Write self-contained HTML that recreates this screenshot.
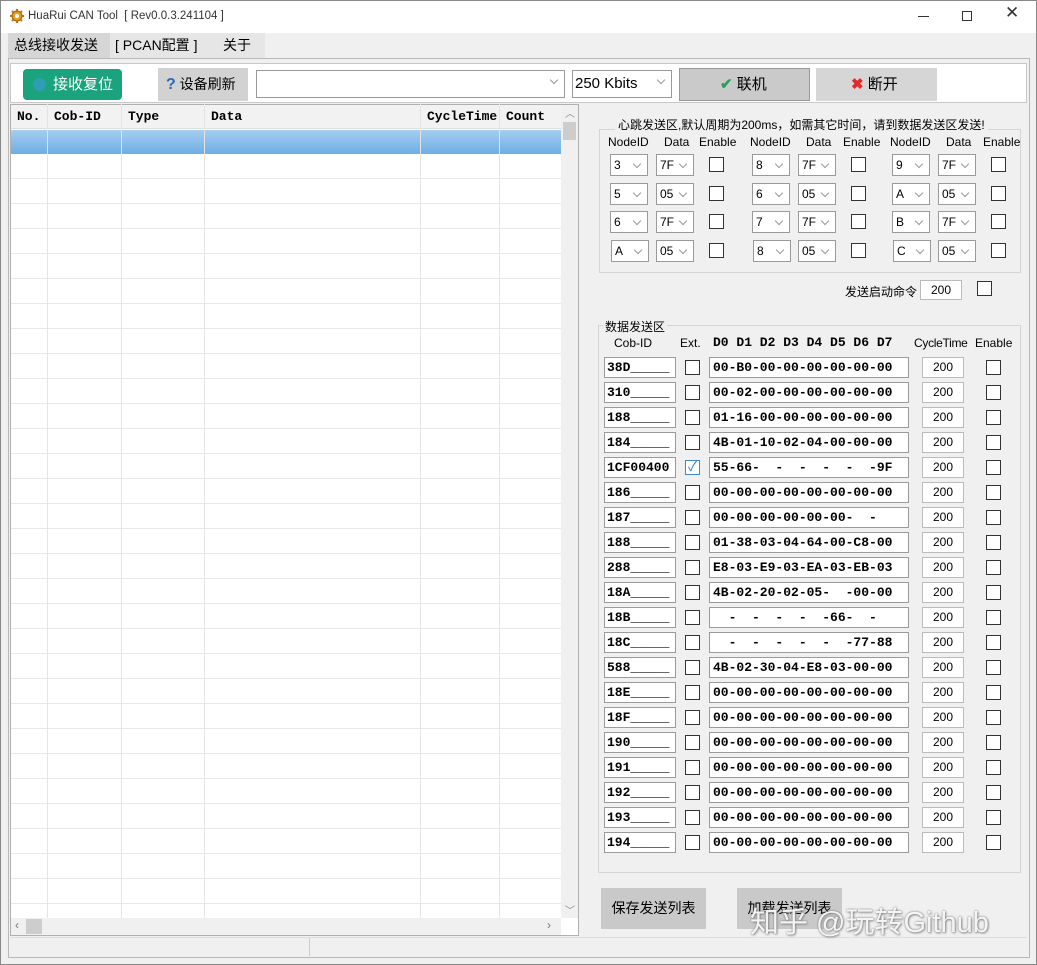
<!DOCTYPE html>
<html><head><meta charset="utf-8"><style>
*{box-sizing:border-box;margin:0;padding:0}
body{width:1037px;height:965px;background:#f0f0f0;position:relative;overflow:hidden;font-family:"Liberation Sans","Noto Sans CJK SC",sans-serif;font-size:12px;color:#000}
.a{position:absolute}
.t{white-space:nowrap}
.mono{font-family:"Liberation Mono","DejaVu Sans Mono",monospace;font-weight:bold;font-size:13px}
.cb{position:absolute;width:15px;height:15px;border:1px solid #333;background:#fff}
.sel{position:absolute;height:22px;border:1px solid #9a9a9a;background:#fff;font-size:12px;line-height:20px;padding-left:3px}
.sel:after{content:"";position:absolute;right:7px;top:6px;width:5px;height:5px;border-right:1px solid #999;border-bottom:1px solid #999;transform:rotate(45deg)}
.in{position:absolute;height:21px;border:1px solid #9a9a9a;background:#fff;line-height:19px;white-space:pre}
.grp{position:absolute;border:1px solid #d5d5d5}
.vl{position:absolute;top:104px;width:1px;height:814px;background:#e4e4e4}
</style></head><body>
<div class="a" style="left:0;top:0;width:1037px;height:33px;background:#fff"></div>
<div class="a" style="left:0;top:0;width:1037px;height:965px;border:1px solid #888;pointer-events:none"></div>
<svg class="a" style="left:9px;top:8px" width="16" height="16" viewBox="0 0 16 16"><circle cx="8" cy="8" r="5" fill="#e0a020" stroke="#a06010"/><circle cx="8" cy="8" r="2" fill="#fff"/><path d="M8 1v3M8 12v3M1 8h3M12 8h3M3 3l2 2M11 11l2 2M13 3l-2 2M3 13l2-2" stroke="#c07010" stroke-width="2"/></svg>
<div class="a t" style="left:28px;top:10px;font-size:11.5px;color:#333">HuaRui CAN Tool &nbsp;[ Rev0.0.3.241104 ]</div>
<div class="a" style="left:918px;top:16px;width:11px;height:1px;background:#333"></div>
<div class="a" style="left:962px;top:11px;width:10px;height:10px;border:1px solid #333"></div>
<div class="a t" style="left:1005px;top:3px;font-size:17px;color:#333">✕</div>
<div class="a" style="left:8px;top:33px;width:257px;height:25px;background:#e6e6e6"></div>
<div class="a t" style="left:8px;top:33px;width:102px;height:25px;background:#d6d6d6;font-size:14px;line-height:25px;padding-left:6px">总线接收发送</div>
<div class="a t" style="left:115px;top:33px;font-size:14px;line-height:25px">[ PCAN配置 ]</div>
<div class="a t" style="left:223px;top:33px;font-size:14px;line-height:25px">关于</div>
<div class="a" style="left:8px;top:58px;width:1022px;height:900px;border:1px solid #b8b8b8;background:#f0f0f0"></div>
<div class="a" style="left:10px;top:63px;width:1017px;height:40px;border:1px solid #c8c8c8;background:#fff"></div>
<div class="a t" style="left:23px;top:69px;width:99px;height:31px;background:#1aa37c;border-radius:4px;color:#fff;font-size:15px;line-height:31px;padding-left:30px">接收复位<div class="a" style="left:10px;top:9px;width:13px;height:13px;border-radius:50%;background:#3a9ad0;opacity:.7"></div></div>
<div class="a t" style="left:158px;top:68px;width:90px;height:33px;background:#d2d2d2;font-size:14px;line-height:33px;padding-left:8px"><b style="color:#2a6ab8;font-size:16px">?</b> 设备刷新</div>
<div class="sel" style="left:256px;top:70px;width:309px;height:28px"></div>
<div class="sel" style="left:572px;top:70px;width:100px;height:28px;font-size:15px;line-height:26px;padding-left:2px">250 Kbits</div>
<div class="a t" style="left:679px;top:68px;width:131px;height:33px;background:#cacaca;border:1px solid #999;font-size:15px;line-height:31px;padding-left:40px"><span style="color:#2aa060;font-weight:bold">✔</span> 联机</div>
<div class="a t" style="left:816px;top:68px;width:121px;height:33px;background:#d6d6d6;font-size:15px;line-height:33px;padding-left:35px"><span style="color:#e02a2a;font-weight:bold">✖</span> 断开</div>
<!-- table -->
<div class="a" style="left:10px;top:104px;width:569px;height:832px;border:1px solid #b0b0b0;background:#fff"></div>
<div class="a" style="left:11px;top:105px;width:550px;height:24px;background:#f2f2f2;border-bottom:1px solid #ddd"></div>
<div class="a" style="left:11px;top:130px;width:550px;height:24px;background:linear-gradient(#a6cdee,#6eaee6)"></div>
<div class="a" style="left:11px;top:154px;width:550px;height:764px;background:repeating-linear-gradient(#fff 0,#fff 24px,#e8e8e8 24px,#e8e8e8 25px)"></div>
<div class="vl" style="left:47px"></div><div class="vl" style="left:121px"></div><div class="vl" style="left:204px"></div><div class="vl" style="left:420px"></div><div class="vl" style="left:499px"></div>
<div class="a t mono" style="left:17px;top:109px">No.</div>
<div class="a t mono" style="left:54px;top:109px">Cob-ID</div>
<div class="a t mono" style="left:128px;top:109px">Type</div>
<div class="a t mono" style="left:211px;top:109px">Data</div>
<div class="a t mono" style="left:427px;top:109px">CycleTime</div>
<div class="a t mono" style="left:506px;top:109px">Count</div>
<div class="a" style="left:561px;top:105px;width:17px;height:813px;background:#f0f0f0"></div>
<div class="a" style="left:563px;top:122px;width:13px;height:18px;background:#cdcdcd"></div>
<div class="a t" style="left:565px;top:105px;color:#888;font-size:10px">︿</div>
<div class="a t" style="left:565px;top:902px;color:#888;font-size:10px">﹀</div>
<div class="a" style="left:11px;top:918px;width:550px;height:17px;background:#f0f0f0"></div>
<div class="a" style="left:26px;top:919px;width:16px;height:15px;background:#cdcdcd"></div>
<div class="a t" style="left:15px;top:918px;color:#777">‹</div>
<div class="a t" style="left:547px;top:918px;color:#777">›</div>
<div class="a" style="left:10px;top:937px;width:1017px;height:19px;background:#f0f0f0;border-top:1px solid #ddd"></div>
<div class="a" style="left:309px;top:938px;width:1px;height:18px;background:#ccc"></div>
<!-- heartbeat -->
<div class="grp" style="left:599px;top:129px;width:422px;height:144px"></div>
<div class="a t" style="left:615px;top:116px;background:#f0f0f0;padding:0 3px;font-size:12px">心跳发送区,默认周期为200ms，如需其它时间，请到数据发送区发送!</div>
<div class="a t" style="left:608px;top:135px">NodeID</div><div class="a t" style="left:664px;top:135px">Data</div><div class="a t" style="left:699px;top:135px">Enable</div>
<div class="a t" style="left:750px;top:135px">NodeID</div><div class="a t" style="left:806px;top:135px">Data</div><div class="a t" style="left:843px;top:135px">Enable</div>
<div class="a t" style="left:890px;top:135px">NodeID</div><div class="a t" style="left:946px;top:135px">Data</div><div class="a t" style="left:983px;top:135px">Enable</div>
<div class="sel" style="left:610px;top:154px;width:38px">3</div><div class="sel" style="left:656px;top:154px;width:38px">7F</div><div class="cb" style="left:709px;top:157px"></div>
<div class="sel" style="left:752px;top:154px;width:38px">8</div><div class="sel" style="left:798px;top:154px;width:38px">7F</div><div class="cb" style="left:851px;top:157px"></div>
<div class="sel" style="left:892px;top:154px;width:38px">9</div><div class="sel" style="left:938px;top:154px;width:38px">7F</div><div class="cb" style="left:991px;top:157px"></div>
<div class="sel" style="left:610px;top:183px;width:38px">5</div><div class="sel" style="left:656px;top:183px;width:38px">05</div><div class="cb" style="left:709px;top:186px"></div>
<div class="sel" style="left:752px;top:183px;width:38px">6</div><div class="sel" style="left:798px;top:183px;width:38px">05</div><div class="cb" style="left:851px;top:186px"></div>
<div class="sel" style="left:892px;top:183px;width:38px">A</div><div class="sel" style="left:938px;top:183px;width:38px">05</div><div class="cb" style="left:991px;top:186px"></div>
<div class="sel" style="left:610px;top:211px;width:38px">6</div><div class="sel" style="left:656px;top:211px;width:38px">7F</div><div class="cb" style="left:709px;top:214px"></div>
<div class="sel" style="left:752px;top:211px;width:38px">7</div><div class="sel" style="left:798px;top:211px;width:38px">7F</div><div class="cb" style="left:851px;top:214px"></div>
<div class="sel" style="left:892px;top:211px;width:38px">B</div><div class="sel" style="left:938px;top:211px;width:38px">7F</div><div class="cb" style="left:991px;top:214px"></div>
<div class="sel" style="left:611px;top:240px;width:38px">A</div><div class="sel" style="left:656px;top:240px;width:38px">05</div><div class="cb" style="left:709px;top:243px"></div>
<div class="sel" style="left:753px;top:240px;width:38px">8</div><div class="sel" style="left:798px;top:240px;width:38px">05</div><div class="cb" style="left:851px;top:243px"></div>
<div class="sel" style="left:893px;top:240px;width:38px">C</div><div class="sel" style="left:938px;top:240px;width:38px">05</div><div class="cb" style="left:991px;top:243px"></div>
<div class="a t" style="left:845px;top:283px;font-size:12px">发送启动命令</div>
<div class="in" style="left:920px;top:280px;width:42px;height:20px;text-align:center;font-size:12px;line-height:18px;border-color:#bbb">200</div>
<div class="cb" style="left:977px;top:281px"></div>
<!-- data group -->
<div class="grp" style="left:598px;top:325px;width:423px;height:548px"></div>
<div class="a t" style="left:603px;top:318px;background:#f0f0f0;padding:0 2px;font-size:12px">数据发送区</div>
<div class="a t" style="left:614px;top:336px">Cob-ID</div>
<div class="a t" style="left:680px;top:336px">Ext.</div>
<div class="a t mono" style="left:713px;top:335px">D0 D1 D2 D3 D4 D5 D6 D7</div>
<div class="a t" style="left:914px;top:336px;letter-spacing:-0.3px">CycleTime</div>
<div class="a t" style="left:975px;top:336px">Enable</div>

<div id="rows">
<div class="in mono" style="left:604px;top:357px;width:72px;padding-left:2px">38D_____</div><div class="cb" style="left:685px;top:360px"></div><div class="in mono" style="left:709px;top:357px;width:200px;padding-left:3px">00-B0-00-00-00-00-00-00</div><div class="in" style="left:922px;top:357px;width:42px;text-align:center;border-color:#bbb">200</div><div class="cb" style="left:986px;top:360px"></div>
<div class="in mono" style="left:604px;top:382px;width:72px;padding-left:2px">310_____</div><div class="cb" style="left:685px;top:385px"></div><div class="in mono" style="left:709px;top:382px;width:200px;padding-left:3px">00-02-00-00-00-00-00-00</div><div class="in" style="left:922px;top:382px;width:42px;text-align:center;border-color:#bbb">200</div><div class="cb" style="left:986px;top:385px"></div>
<div class="in mono" style="left:604px;top:407px;width:72px;padding-left:2px">188_____</div><div class="cb" style="left:685px;top:410px"></div><div class="in mono" style="left:709px;top:407px;width:200px;padding-left:3px">01-16-00-00-00-00-00-00</div><div class="in" style="left:922px;top:407px;width:42px;text-align:center;border-color:#bbb">200</div><div class="cb" style="left:986px;top:410px"></div>
<div class="in mono" style="left:604px;top:432px;width:72px;padding-left:2px">184_____</div><div class="cb" style="left:685px;top:435px"></div><div class="in mono" style="left:709px;top:432px;width:200px;padding-left:3px">4B-01-10-02-04-00-00-00</div><div class="in" style="left:922px;top:432px;width:42px;text-align:center;border-color:#bbb">200</div><div class="cb" style="left:986px;top:435px"></div>
<div class="in mono" style="left:604px;top:457px;width:72px;padding-left:2px">1CF00400</div><div class="cb" style="left:685px;top:460px;border-color:#3a8ad0;color:#2a7ac0;font-size:13px;line-height:12px;text-align:center">✓</div><div class="in mono" style="left:709px;top:457px;width:200px;padding-left:3px">55-66-  -  -  -  -  -9F</div><div class="in" style="left:922px;top:457px;width:42px;text-align:center;border-color:#bbb">200</div><div class="cb" style="left:986px;top:460px"></div>
<div class="in mono" style="left:604px;top:482px;width:72px;padding-left:2px">186_____</div><div class="cb" style="left:685px;top:485px"></div><div class="in mono" style="left:709px;top:482px;width:200px;padding-left:3px">00-00-00-00-00-00-00-00</div><div class="in" style="left:922px;top:482px;width:42px;text-align:center;border-color:#bbb">200</div><div class="cb" style="left:986px;top:485px"></div>
<div class="in mono" style="left:604px;top:507px;width:72px;padding-left:2px">187_____</div><div class="cb" style="left:685px;top:510px"></div><div class="in mono" style="left:709px;top:507px;width:200px;padding-left:3px">00-00-00-00-00-00-  -</div><div class="in" style="left:922px;top:507px;width:42px;text-align:center;border-color:#bbb">200</div><div class="cb" style="left:986px;top:510px"></div>
<div class="in mono" style="left:604px;top:532px;width:72px;padding-left:2px">188_____</div><div class="cb" style="left:685px;top:535px"></div><div class="in mono" style="left:709px;top:532px;width:200px;padding-left:3px">01-38-03-04-64-00-C8-00</div><div class="in" style="left:922px;top:532px;width:42px;text-align:center;border-color:#bbb">200</div><div class="cb" style="left:986px;top:535px"></div>
<div class="in mono" style="left:604px;top:557px;width:72px;padding-left:2px">288_____</div><div class="cb" style="left:685px;top:560px"></div><div class="in mono" style="left:709px;top:557px;width:200px;padding-left:3px">E8-03-E9-03-EA-03-EB-03</div><div class="in" style="left:922px;top:557px;width:42px;text-align:center;border-color:#bbb">200</div><div class="cb" style="left:986px;top:560px"></div>
<div class="in mono" style="left:604px;top:582px;width:72px;padding-left:2px">18A_____</div><div class="cb" style="left:685px;top:585px"></div><div class="in mono" style="left:709px;top:582px;width:200px;padding-left:3px">4B-02-20-02-05-  -00-00</div><div class="in" style="left:922px;top:582px;width:42px;text-align:center;border-color:#bbb">200</div><div class="cb" style="left:986px;top:585px"></div>
<div class="in mono" style="left:604px;top:607px;width:72px;padding-left:2px">18B_____</div><div class="cb" style="left:685px;top:610px"></div><div class="in mono" style="left:709px;top:607px;width:200px;padding-left:3px">  -  -  -  -  -66-  -</div><div class="in" style="left:922px;top:607px;width:42px;text-align:center;border-color:#bbb">200</div><div class="cb" style="left:986px;top:610px"></div>
<div class="in mono" style="left:604px;top:632px;width:72px;padding-left:2px">18C_____</div><div class="cb" style="left:685px;top:635px"></div><div class="in mono" style="left:709px;top:632px;width:200px;padding-left:3px">  -  -  -  -  -  -77-88</div><div class="in" style="left:922px;top:632px;width:42px;text-align:center;border-color:#bbb">200</div><div class="cb" style="left:986px;top:635px"></div>
<div class="in mono" style="left:604px;top:657px;width:72px;padding-left:2px">588_____</div><div class="cb" style="left:685px;top:660px"></div><div class="in mono" style="left:709px;top:657px;width:200px;padding-left:3px">4B-02-30-04-E8-03-00-00</div><div class="in" style="left:922px;top:657px;width:42px;text-align:center;border-color:#bbb">200</div><div class="cb" style="left:986px;top:660px"></div>
<div class="in mono" style="left:604px;top:682px;width:72px;padding-left:2px">18E_____</div><div class="cb" style="left:685px;top:685px"></div><div class="in mono" style="left:709px;top:682px;width:200px;padding-left:3px">00-00-00-00-00-00-00-00</div><div class="in" style="left:922px;top:682px;width:42px;text-align:center;border-color:#bbb">200</div><div class="cb" style="left:986px;top:685px"></div>
<div class="in mono" style="left:604px;top:707px;width:72px;padding-left:2px">18F_____</div><div class="cb" style="left:685px;top:710px"></div><div class="in mono" style="left:709px;top:707px;width:200px;padding-left:3px">00-00-00-00-00-00-00-00</div><div class="in" style="left:922px;top:707px;width:42px;text-align:center;border-color:#bbb">200</div><div class="cb" style="left:986px;top:710px"></div>
<div class="in mono" style="left:604px;top:732px;width:72px;padding-left:2px">190_____</div><div class="cb" style="left:685px;top:735px"></div><div class="in mono" style="left:709px;top:732px;width:200px;padding-left:3px">00-00-00-00-00-00-00-00</div><div class="in" style="left:922px;top:732px;width:42px;text-align:center;border-color:#bbb">200</div><div class="cb" style="left:986px;top:735px"></div>
<div class="in mono" style="left:604px;top:757px;width:72px;padding-left:2px">191_____</div><div class="cb" style="left:685px;top:760px"></div><div class="in mono" style="left:709px;top:757px;width:200px;padding-left:3px">00-00-00-00-00-00-00-00</div><div class="in" style="left:922px;top:757px;width:42px;text-align:center;border-color:#bbb">200</div><div class="cb" style="left:986px;top:760px"></div>
<div class="in mono" style="left:604px;top:782px;width:72px;padding-left:2px">192_____</div><div class="cb" style="left:685px;top:785px"></div><div class="in mono" style="left:709px;top:782px;width:200px;padding-left:3px">00-00-00-00-00-00-00-00</div><div class="in" style="left:922px;top:782px;width:42px;text-align:center;border-color:#bbb">200</div><div class="cb" style="left:986px;top:785px"></div>
<div class="in mono" style="left:604px;top:807px;width:72px;padding-left:2px">193_____</div><div class="cb" style="left:685px;top:810px"></div><div class="in mono" style="left:709px;top:807px;width:200px;padding-left:3px">00-00-00-00-00-00-00-00</div><div class="in" style="left:922px;top:807px;width:42px;text-align:center;border-color:#bbb">200</div><div class="cb" style="left:986px;top:810px"></div>
<div class="in mono" style="left:604px;top:832px;width:72px;padding-left:2px">194_____</div><div class="cb" style="left:685px;top:835px"></div><div class="in mono" style="left:709px;top:832px;width:200px;padding-left:3px">00-00-00-00-00-00-00-00</div><div class="in" style="left:922px;top:832px;width:42px;text-align:center;border-color:#bbb">200</div><div class="cb" style="left:986px;top:835px"></div>
</div>
<div class="a t" style="left:601px;top:888px;width:105px;height:41px;background:#c9c9c9;font-size:14px;line-height:41px;text-align:center">保存发送列表</div>
<div class="a t" style="left:737px;top:888px;width:105px;height:41px;background:#c9c9c9;font-size:14px;line-height:41px;text-align:center">加载发送列表</div>
<div class="a t" style="left:750px;top:899px;font-size:29px;color:rgba(255,255,255,.9);text-shadow:0 0 2px #777,1px 1px 2px #999">知乎 @玩转Github</div>
</body></html>
